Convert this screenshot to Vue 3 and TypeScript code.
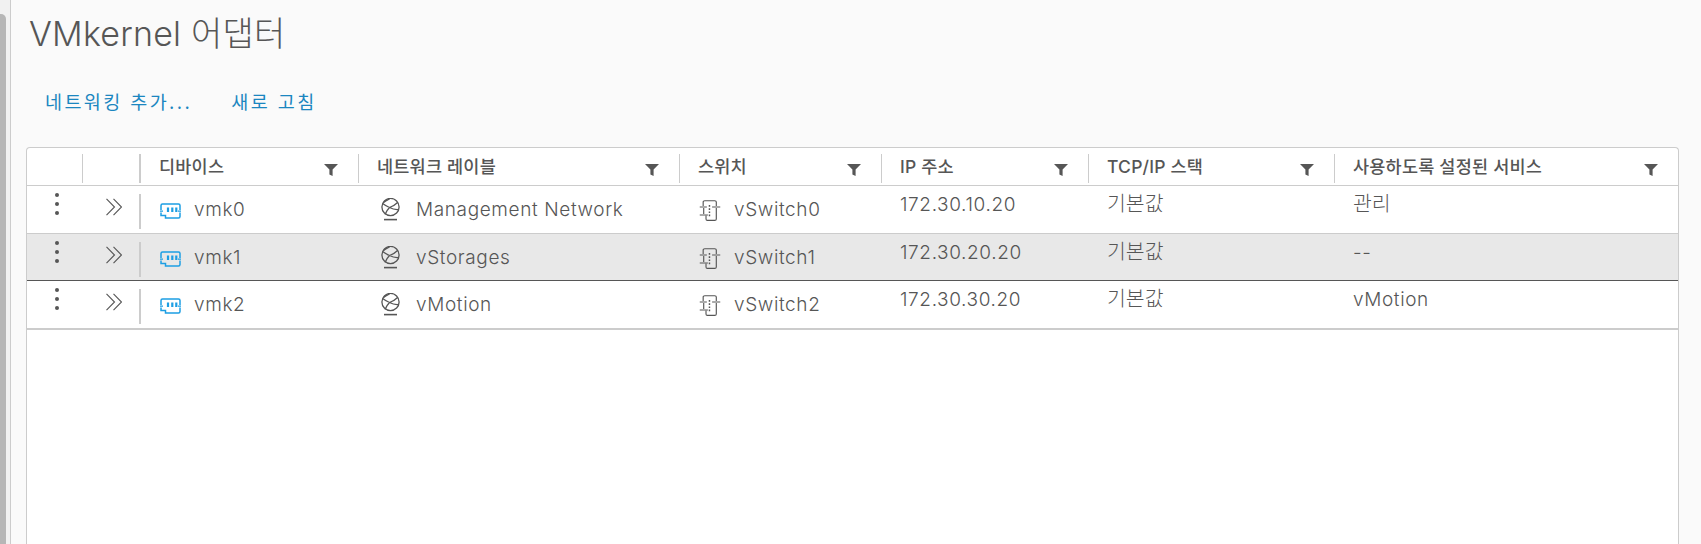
<script setup lang="ts">
interface Row {
  dev: string;
  net: string;
  sw: string;
  ip: string;
  stack: string;
  svc: string;
  svcKo: boolean;
  cls: string;
}
const headers: string[] = ['디바이스', '네트워크 레이블', '스위치', 'IP 주소', 'TCP/IP 스택', '사용하도록 설정된 서비스'];
const rows: Row[] = [
  { dev: 'vmk0', net: 'Management Network', sw: 'vSwitch0', ip: '172.30.10.20', stack: '기본값', svc: '관리', svcKo: true, cls: 'r0' },
  { dev: 'vmk1', net: 'vStorages', sw: 'vSwitch1', ip: '172.30.20.20', stack: '기본값', svc: '--', svcKo: false, cls: 'r1' },
  { dev: 'vmk2', net: 'vMotion', sw: 'vSwitch2', ip: '172.30.30.20', stack: '기본값', svc: 'vMotion', svcKo: false, cls: 'r2' },
];
</script>

<template>
  <div class="page">
    <div class="rail"><div class="thumb"></div></div>
    <main class="main">
      <h1 class="title">VMkernel 어댑터</h1>
      <div class="actions">
        <a class="action">네트워킹 추가...</a>
        <a class="action">새로 고침</a>
      </div>
      <div class="grid">
        <div class="head">
          <div class="hcell narrow"></div>
          <div class="hcell narrow"></div>
          <div v-for="h in headers" :key="h" class="hcell">
            <span class="hlabel">{{ h }}</span>
            <svg class="filter" viewBox="0 0 14 12" width="14" height="12">
              <path d="M0 0H14L8.6 5.6V12L5.4 10.4V5.6Z" fill="#565656" />
            </svg>
          </div>
        </div>
        <div v-for="r in rows" :key="r.dev" class="row" :class="r.cls">
          <div class="cell menu"><i></i><i></i><i></i></div>
          <div class="cell expand">
            <svg viewBox="0 0 16 18" width="16" height="18" fill="none" stroke="#565656" stroke-width="1.1">
              <path d="M0.5 0.8 8.5 9 0.5 17.2M7.5 0.8 15.5 9 7.5 17.2" />
            </svg>
          </div>
          <div class="cell iconic">
            <svg class="ic ic-dev" viewBox="0 0 21 16" width="21" height="16" fill="none" stroke="#1d9ee3" stroke-width="1.5">
              <path d="M1 7V2.5Q1 1 2.5 1H18.5Q20 1 20 2.5V7M20 9.5V13.5Q20 15 18.5 15H5.5V12.5H1V9.5" />
              <path d="M0 8.2H3M18 8.2H21" stroke-width="1.2" />
              <path d="M8 4.5V9M12.3 4.5V9M16.3 4.5V9" stroke-width="2.2" />
            </svg>
            <span>{{ r.dev }}</span>
          </div>
          <div class="cell iconic">
            <svg class="ic ic-net" viewBox="0 0 21 23" width="21" height="23" fill="none" stroke="#565656" stroke-width="1.3">
              <circle cx="10.5" cy="9" r="8.6" />
              <path d="M2.6 5.5Q6 8 9.5 9.5Q14 8 17.6 4.5M9.5 9.5Q7 12 5 16.5M9.5 9.5Q14 12 18.8 11.5M9.5 0.8Q6 2.5 3.5 4.5" />
              <path d="M4 21.6H17" stroke-width="1.6" />
            </svg>
            <span>{{ r.net }}</span>
          </div>
          <div class="cell iconic">
            <svg class="ic ic-sw" viewBox="0 0 20 21" width="20" height="21" fill="none" stroke="#565656" stroke-width="1.1">
              <path d="M3.5 6V2Q3.5 0.8 5 0.8H14.5Q16 0.8 16 2V6M16 8V19Q16 20.4 14.5 20.4H7.5Q6.2 20.4 6.2 19V15.5M4 14V8" />
              <path d="M0 7H7M12 7H20M0 15H8" />
              <path d="M9.5 5V17" stroke-dasharray="1.7 1.5" stroke-width="1.4" />
            </svg>
            <span>{{ r.sw }}</span>
          </div>
          <div class="cell plain">{{ r.ip }}</div>
          <div class="cell plain ko">{{ r.stack }}</div>
          <div class="cell plain" :class="{ ko: r.svcKo }">{{ r.svc }}</div>
        </div>
      </div>
    </main>
  </div>
</template>

<style scoped>
.page {
  display: flex;
  height: 544px;
  overflow: hidden;
  background: #fafafa;
  color: #565656;
  font-family: "Inter", "Noto Sans CJK KR", sans-serif;
}
.rail {
  width: 10px;
  flex: none;
  background: #f1f1f1;
  border-right: 1px solid #cccccc;
}
.thumb {
  width: 6px;
  height: 530px;
  margin-top: 14px;
  background: #b6b6b6;
  border-radius: 0 5px 0 0;
}
.main {
  flex: 1;
  min-width: 0;
  padding: 0 22px 0 15px;
  display: flex;
  flex-direction: column;
}
.title {
  margin: 14px 0 0 3px;
  height: 40px;
  font-size: 34px;
  line-height: 40px;
  font-weight: 300;
  letter-spacing: 0.2px;
  color: #565656;
}
.actions {
  display: flex;
  gap: 39px;
  margin: 35px 0 0 19px;
  height: 58px;
}
.action {
  font-size: 18.5px;
  font-weight: 400;
  line-height: 26px;
  letter-spacing: 2.4px;
  color: #1b86c0;
}
.grid {
  flex: 1;
  background: #fff;
  border: 1px solid #cccccc;
  border-bottom: none;
  border-radius: 4px 4px 0 0;
}
.head,
.row {
  display: grid;
  grid-template-columns: 56px 58px 218px 321px 202px 207px 246px 1fr;
}
.head {
  height: 38px;
  border-bottom: 1px solid #cccccc;
  box-sizing: border-box;
}
.hcell {
  display: flex;
  align-items: flex-start;
  justify-content: space-between;
  height: 28px;
  margin-top: 6px;
  padding: 1px 20px 0 18px;
  border-right: 1px solid #cccccc;
  font-size: 17.5px;
  font-weight: 500;
  letter-spacing: 0.2px;
  line-height: 24px;
}
.hcell:last-child {
  border-right: none;
}
.hcell:nth-child(2),
.hcell:nth-child(8) {
  border-right-width: 2px;
}
.filter {
  flex: none;
  margin-top: 9px;
}
.row {
  box-sizing: border-box;
  border-bottom: 1px solid #cccccc;
  height: 48px;
  font-size: 19px;
  font-weight: 300;
  letter-spacing: 0.62px;
}
.r1 {
  height: 47px;
  background: #e8e8e8;
  border-bottom-color: #565656;
}
.r2 {
  height: 49px;
  border-bottom-width: 2px;
}
.cell {
  min-width: 0;
  padding-left: 18px;
}
.menu {
  display: flex;
  flex-direction: column;
  align-items: center;
  gap: 5px;
  padding: 7px 0 0 4px;
}
.menu i {
  width: 4px;
  height: 4px;
  border-radius: 50%;
  background: #565656;
}
.expand {
  display: flex;
  align-items: flex-start;
  justify-content: flex-end;
  height: 31px;
  margin-top: 8px;
  padding: 4px 17px 0 0;
  border-right: 2px solid #cccccc;
}
.iconic {
  display: flex;
  align-items: center;
  height: 47px;
  gap: 14px;
}
.ic {
  flex: none;
}
.ic-dev {
  margin: 2px -1px 0 1px;
}
.ic-net {
  margin: 0 1px 0 3px;
}
.ic-sw {
  margin: 1px 0 0 2px;
  transform: scaleX(1.05);
}
.plain {
  padding-top: 6px;
  line-height: 26px;
}
.ko {
  font-size: 20.5px;
  letter-spacing: 0;
  padding-top: 5px;
}
</style>
